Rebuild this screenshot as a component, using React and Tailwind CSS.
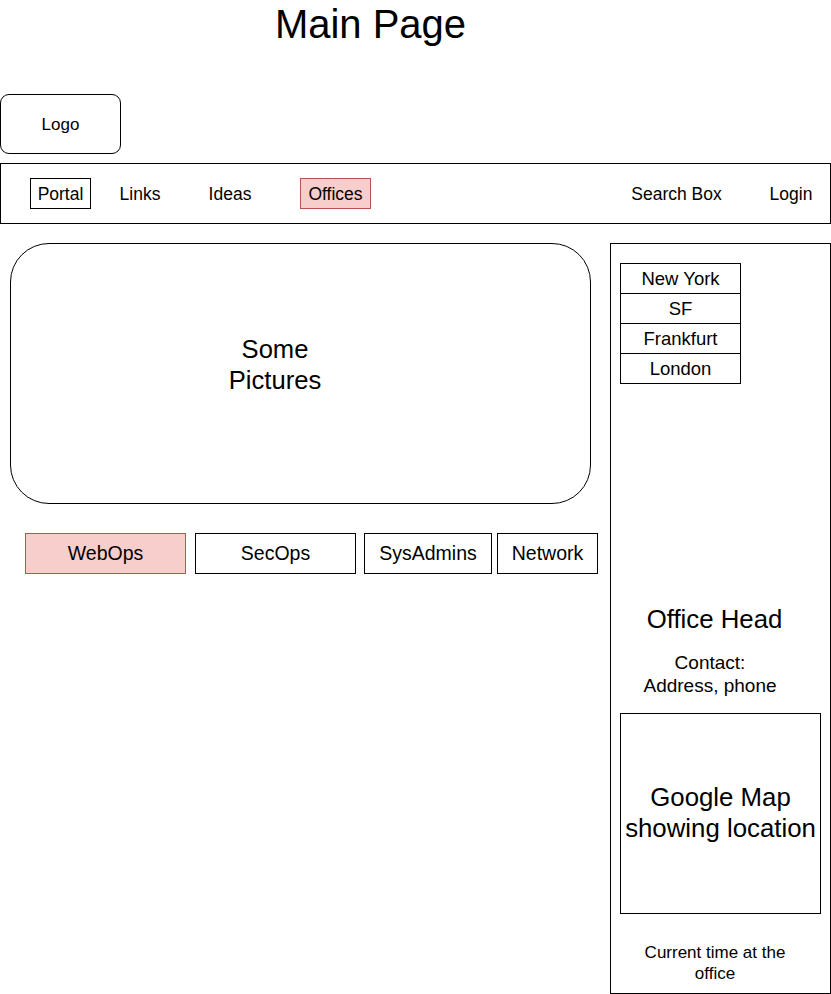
const cities = ["New York", "SF", "Frankfurt", "London"];

const NavItem = ({ label, className }) => (
  <div className={`flex items-center justify-center ${className}`}>{label}</div>
);

export default function App() {
  return (
    <div className="relative w-[831px] h-[994px] bg-white text-black font-['Liberation_Sans',Arial,sans-serif] overflow-hidden">
      {/* Title */}
      <div className="w-[741px] h-[48px] text-center text-[40px] leading-[48px]">
        Main Page
      </div>

      {/* Logo */}
      <div className="mt-[46px] w-[121px] h-[60px] border border-black rounded-[9px] flex items-center justify-center text-[17px] pt-[1px]">
        Logo
      </div>

      {/* Nav bar */}
      <nav className="mt-[9px] w-[831px] h-[61px] border border-black flex items-center text-[17.5px] pl-[29px] pr-[9px]">
        <NavItem label="Portal" className="w-[61px] h-[31px] border border-black pt-[1px]" />
        <NavItem label="Links" className="ml-[19px] w-[60px] h-[31px] pt-[1px]" />
        <NavItem label="Ideas" className="ml-[30px] w-[60px] h-[31px] pt-[1px]" />
        <NavItem
          label="Offices"
          className="ml-[40px] w-[71px] h-[31px] border border-[#b85450] bg-[#f8cecc] pt-[1px]"
        />
        <NavItem label="Search Box" className="ml-auto w-[101px] h-[31px] pt-[1px]" />
        <NavItem label="Login" className="ml-[34px] w-[60px] h-[31px] pt-[1px]" />
      </nav>

      {/* Body */}
      <div className="mt-[19px] flex">
        {/* Main column */}
        <div className="w-[610px]">
          <div className="ml-[10px] w-[581px] h-[261px] border border-black rounded-[39px] flex items-center justify-center pr-[51px] pb-[18px]">
            <div className="text-center text-[25.6px] leading-[31px]">
              Some
              <br />
              Pictures
            </div>
          </div>

          <div className="mt-[29px] ml-[25px] flex text-[19.5px]">
            <div className="w-[161px] h-[41px] border border-[#b85450] bg-[#f8cecc] flex items-center justify-center">
              WebOps
            </div>
            <div className="ml-[9px] w-[161px] h-[41px] border border-black flex items-center justify-center">
              SecOps
            </div>
            <div className="ml-[8px] w-[128px] h-[41px] border border-black flex items-center justify-center">
              SysAdmins
            </div>
            <div className="ml-[5px] w-[101px] h-[41px] border border-black flex items-center justify-center">
              Network
            </div>
          </div>
        </div>

        {/* Office sidebar */}
        <aside className="w-[221px] h-[751px] border border-black pt-[19px] pl-[9px]">
          <div className="w-[121px] border-x border-black text-[18.5px]">
            {cities.map((city, i) => (
              <div
                key={city}
                className={`flex items-center justify-center border-t border-black ${
                  i === cities.length - 1 ? "h-[31px] border-b" : "h-[30px]"
                }`}
              >
                {city}
              </div>
            ))}
          </div>

          <div className="mt-[220px] w-[201px] text-center text-[25.8px] leading-[31px] pl-[1px] pr-[13px]">
            Office Head
          </div>

          <div className="mt-[16px] w-[201px] text-center text-[19px] leading-[23px] pr-[21px]">
            Contact:
            <br />
            Address, phone
          </div>

          <div className="mt-[15.5px] w-[201px] h-[201px] border border-black flex items-center justify-center text-center text-[25.8px] leading-[31px]">
            Google Map
            <br />
            showing location
          </div>

          <div className="mt-[28.5px] w-[201px] text-center text-[17px] leading-[21px] pr-[11px]">
            Current time at the
            <br />
            office
          </div>
        </aside>
      </div>
    </div>
  );
}
